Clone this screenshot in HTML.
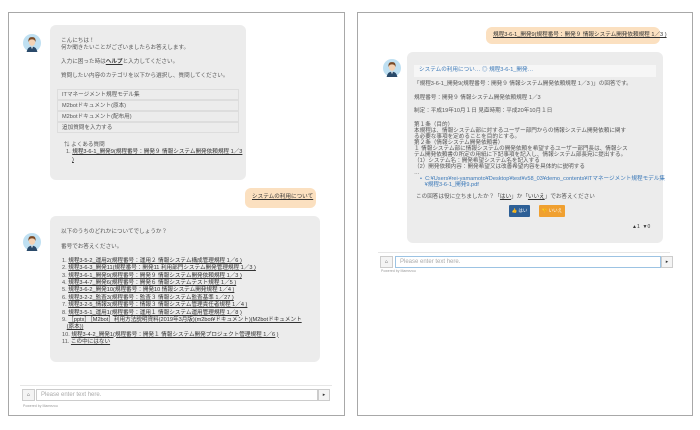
<!DOCTYPE html>
<html><head><meta charset="utf-8"><style>
*{margin:0;padding:0;box-sizing:border-box}
body{width:700px;height:430px;background:#fff;position:relative;overflow:hidden;font-family:"Liberation Sans","Noto Sans CJK JP",sans-serif;color:#555;font-size:5.6px}
.a{position:absolute;white-space:nowrap;line-height:7px}
.panel{position:absolute;border:1px solid #a8a8a8;background:#fff}
.bub{position:absolute;background:#ececec;border-radius:6px}
.ub{position:absolute;background:#fbe0c0;border-radius:6px}
.av{position:absolute;width:18px;height:18px}
.lk{color:#333;text-decoration:underline}
.bx{position:absolute;left:57px;width:182px;height:11px;border:1px solid #ddd;background:#ececec;padding-left:4px;line-height:10px}
.hr{position:absolute;height:1px;background:#e6e6e6}
.ib{position:absolute;height:12px;border:1px solid #ccc;background:#f4f4f4;font-size:5px;text-align:center;line-height:10px;color:#333}
.in{position:absolute;height:12px;border:1px solid #ccc;background:#fff;color:#aaa;font-size:6px;line-height:10px;padding-left:4px}
.pw{position:absolute;font-size:3.5px;color:#999}
</style></head><body>
<svg width="0" height="0" style="position:absolute"><defs>
<symbol id="av" viewBox="0 0 20 20"><circle cx="10" cy="10" r="10" fill="#bfe0f2"/><path d="M4 20 Q5 14 10 14 Q15 14 16 20Z" fill="#2a4a6a"/><path d="M9 14 L10 17 L11 14Z" fill="#fff"/><ellipse cx="10" cy="9" rx="3.6" ry="4.2" fill="#f3d2b5"/><path d="M6 9 Q5.5 3 10 3.5 Q14.5 3 14 9 Q13 6 10 6 Q7 6 6 9Z" fill="#7a4a26"/></symbol></defs></svg>

<div class="panel" style="left:8px;top:12px;width:337px;height:404px"></div>
<svg class="av" style="left:23px;top:34px"><use href="#av"/></svg>
<div class="bub" style="left:50px;top:25px;width:196px;height:155px"></div>
<div class="a" style="left:61px;top:38px">こんにちは！</div>
<div class="a" style="left:61px;top:45px">何か聞きたいことがございましたらお答えします。</div>
<div class="a" style="left:61px;top:59px">入力に困った時は<b class="lk">ヘルプ</b>と入力してください。</div>
<div class="a" style="left:61px;top:73px">質問したい内容のカテゴリを以下から選択し、質問してください。</div>
<div class="bx a" style="top:89px">ITマネージメント規程モデル集</div>
<div class="bx a" style="top:100px">M2botドキュメント(原本)</div>
<div class="bx a" style="top:111px">M2botドキュメント(配布用)</div>
<div class="bx a" style="top:122px">追加質問を入力する</div>
<div class="a" style="left:64px;top:142px">⇅ よくある質問</div>
<div class="a" style="left:66px;top:149px">1. <span class="lk">規程3-6-1_開発9(規程番号：開発９ 情報システム開発依頼規程 1／3</span></div>
<div class="a" style="left:72px;top:157px"><span class="lk">)</span></div>

<div class="ub" style="left:245px;top:188px;width:71px;height:20px"></div>
<div class="a" style="left:252px;top:194px"><span class="lk">システムの利用について</span></div>

<svg class="av" style="left:23px;top:233px"><use href="#av"/></svg>
<div class="bub" style="left:50px;top:216px;width:270px;height:146px"></div>
<div class="a" style="left:61px;top:229px">以下のうちのどれかについてでしょうか？</div>
<div class="a" style="left:61px;top:244px">番号でお答えください。</div>
<div class="a" style="left:62px;top:258px;line-height:7.36px">
1. <span class="lk">規程3-5-2_運用2(規程番号：運用２ 情報システム構成管理規程 1／6 )</span><br>
2. <span class="lk">規程3-6-3_開発11(規程番号：開発11 利用部門システム開発管理規程 1／3 )</span><br>
3. <span class="lk">規程3-6-1_開発9(規程番号：開発９ 情報システム開発依頼規程 1／3 )</span><br>
4. <span class="lk">規程3-4-7_開発6(規程番号：開発６ 情報システムテスト規程 1／5 )</span><br>
5. <span class="lk">規程3-6-2_開発10(規程番号：開発10 情報システム開発規程 1／4 )</span><br>
6. <span class="lk">規程3-2-2_監査3(規程番号：監査３ 情報システム監査基準 1／27 )</span><br>
7. <span class="lk">規程3-2-5_情報3(規程番号：情報３ 情報システム管理責任者規程 1／4 )</span><br>
8. <span class="lk">規程3-5-1_運用1(規程番号：運用１ 情報システム運用管理規程 1／8 )</span><br>
9. <span class="lk">［pptx］［M2bot］利用方法説明資料(2019年3月版)(m2bot¥ドキュメント)(M2botドキュメント</span><br>
&nbsp;&nbsp;&nbsp;<span class="lk">(原本))</span><br>
10. <span class="lk">規程3-4-2_開発1(規程番号：開発１ 情報システム開発プロジェクト管理規程 1／6 )</span><br>
11. <span class="lk">この中にはない</span></div>

<div class="hr" style="left:20px;top:385px;width:312px"></div>
<div class="ib" style="left:22px;top:389px;width:13px">⌂</div>
<div class="in" style="left:36px;top:389px;width:282px">Please enter text here.</div>
<div class="ib" style="left:318px;top:389px;width:12px">▸</div>
<div class="pw" style="left:23px;top:404px">Powered by Mamezou</div>

<div class="panel" style="left:357px;top:12px;width:336px;height:404px"></div>
<div class="ub" style="left:486px;top:27px;width:174px;height:17px"></div>
<div class="a" style="left:493px;top:32px"><span class="lk">規程3-6-1_開発9(規程番号：開発９ 情報システム開発依頼規程 1／3 )</span></div>

<svg class="av" style="left:383px;top:59px"><use href="#av"/></svg>
<div class="bub" style="left:407px;top:52px;width:256px;height:191px"></div>
<div style="position:absolute;left:414px;top:65px;width:242px;height:12px;background:#f6f6f6"></div>
<div class="a" style="left:419px;top:67px;color:#3a78b8">システムの利用につい… ◎ 規程3-6-1_開発…</div>
<div class="a" style="left:414px;top:81px">「規程3-6-1_開発9(規程番号：開発９ 情報システム開発依頼規程 1／3 )」の回答です。</div>
<div class="a" style="left:414px;top:95px">規程番号：開発９ 情報システム開発依頼規程 1／3</div>
<div class="a" style="left:414px;top:108px">制定：平成19年10月１日 見直時期：平成20年10月１日</div>
<div class="a" style="left:414px;top:122px;line-height:6px">第１条（目的）<br>本規程は、情報システム部に対するユーザー部門からの情報システム開発依頼に関す<br>る必要な事項を定めることを目的とする。<br>第２条（情報システム開発依頼書）<br>１ 情報システム部に情報システムの開発依頼を希望するユーザー部門長は、情報シス<br>テム開発依頼書の所定の用紙に下記事項を記入し、情報システム部長宛に提出する。<br>（1）システム名：開発希望システム名を記入する<br>（2）開発依頼内容：開発希望又は改善希望内容を具体的に説明する<br>…</div>
<div class="a" style="left:420px;top:176px;line-height:6px;color:#3a78b8">•&nbsp; C:¥Users¥rei-yamamoto¥Desktop¥test¥v58_03¥demo_contents¥ITマネージメント規程モデル集<br>&nbsp;&nbsp;&nbsp;¥規程3-6-1_開発9.pdf</div>
<div class="a" style="left:416px;top:194px">この回答は役に立ちましたか？「<span class="lk">はい</span>」か「<span class="lk">いいえ</span>」でお答えください</div>
<div style="position:absolute;left:509px;top:205px;width:21px;height:12px;background:#2d5f96;border-radius:1px;color:#fff;font-size:4.5px;text-align:center;line-height:12px">👍 はい</div>
<div style="position:absolute;left:539px;top:205px;width:26px;height:12px;background:#f0a030;border-radius:1px;color:#fff;font-size:4.5px;text-align:center;line-height:12px">👎 いいえ</div>
<div class="a" style="left:632px;top:224px;color:#333;font-size:5px">▲1 &nbsp;▼0</div>

<div class="hr" style="left:378px;top:252px;width:292px"></div>
<div class="ib" style="left:380px;top:256px;width:13px">⌂</div>
<div class="in" style="left:395px;top:256px;width:266px;border-color:#9cc3e3">Please enter text here.</div>
<div class="ib" style="left:661px;top:256px;width:12px">▸</div>
<div class="pw" style="left:381px;top:269px">Powered by Mamezou</div>
</body></html>
